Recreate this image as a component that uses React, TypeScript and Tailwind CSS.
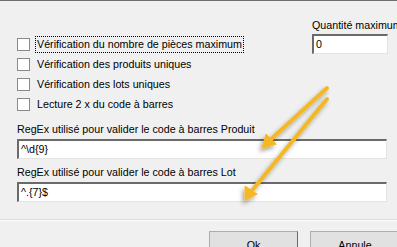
import React from "react";

const font = { fontFamily: '"Liberation Sans", Arial, sans-serif' };

function Check({ label, focused }: { label: string; focused?: boolean }) {
  return (
    <div className="flex h-[20px] items-center gap-[5px]">
      <span className="box-border h-[13px] w-[13px] border border-[#8a8a8a] bg-white" />
      <span className={focused ? "border border-dotted border-black px-[1px] leading-[15px]" : "px-[2px] leading-[15px]"}>{label}</span>
    </div>
  );
}

function Field({ value, className }: { value: string; className: string }) {
  return (
    <div className={"box-border h-[20px] border-t-2 border-l-2 border-r border-b border-t-[#6a6a6a] border-l-[#6a6a6a] border-r-[#e3e3e3] border-b-[#e3e3e3] bg-white pl-[2px] leading-[16px] " + className}>
      {value}
    </div>
  );
}

function Arrows() {
  return (
    <svg className="pointer-events-none absolute left-0 top-0" width="397" height="247" viewBox="0 0 397 247">
      <defs>
        <filter id="sh" x="-20%" y="-20%" width="140%" height="140%">
          <feDropShadow dx="-2" dy="3" stdDeviation="2" floodColor="#000" floodOpacity="0.35" />
        </filter>
      </defs>
      <g filter="url(#sh)" fill="#f4b826" stroke="#f4b826" strokeLinecap="round">
        <line x1="327" y1="87" x2="268" y2="141" strokeWidth="4" />
        <polygon points="262,147 266,133 276,143" strokeWidth="1" strokeLinejoin="round" />
        <line x1="327" y1="98" x2="250" y2="192" strokeWidth="4" />
        <polygon points="245,199 245,185 257,193" strokeWidth="1" strokeLinejoin="round" />
      </g>
    </svg>
  );
}

export default function App() {
  return (
    <div style={font} className="relative box-border h-[247px] w-[397px] overflow-hidden border-t border-[#6e6e6e] bg-[#f0f0f0] text-[10.7px] text-black">
      <div className="flex pl-[17px]">
        <div className="flex w-[295px] shrink-0 flex-col pt-[33px]">
          <Check label="Vérification du nombre de pièces maximum" focused />
          <Check label="Vérification des produits uniques" />
          <Check label="Vérification des lots uniques" />
          <Check label="Lecture 2 x du code à barres" />
        </div>
        <div className="flex shrink-0 flex-col pt-[17px]">
          <span className="whitespace-nowrap leading-[15px]">Quantité maximum</span>
          <Field value="0" className="mt-[1px] w-[76px]" />
        </div>
      </div>
      <div className="flex flex-col pl-[17px] pr-[10px] pt-[8px]">
        <span className="leading-[15px]">RegEx utilisé pour valider le code à barres Produit</span>
        <Field value="^\d{9}" className="mt-[2px] w-[370px]" />
        <span className="mt-[6px] leading-[15px]">RegEx utilisé pour valider le code à barres Lot</span>
        <Field value="^.{7}$" className="mt-[2px] w-[370px]" />
      </div>
      <div className="mt-[17px] border-t border-b border-t-[#dcdcdc] border-b-white" />
      <div className="flex justify-end gap-[12px] pt-[10px]">
        <button className="box-border h-[28px] w-[89px] shrink-0 border border-[#adadad] border-r-[#6a6a6a] bg-[#e1e1e1]">Ok</button>
        <button className="-mr-[3px] box-border h-[28px] w-[90px] shrink-0 border border-[#adadad] bg-[#e1e1e1]">Annule</button>
      </div>
      <Arrows />
    </div>
  );
}
